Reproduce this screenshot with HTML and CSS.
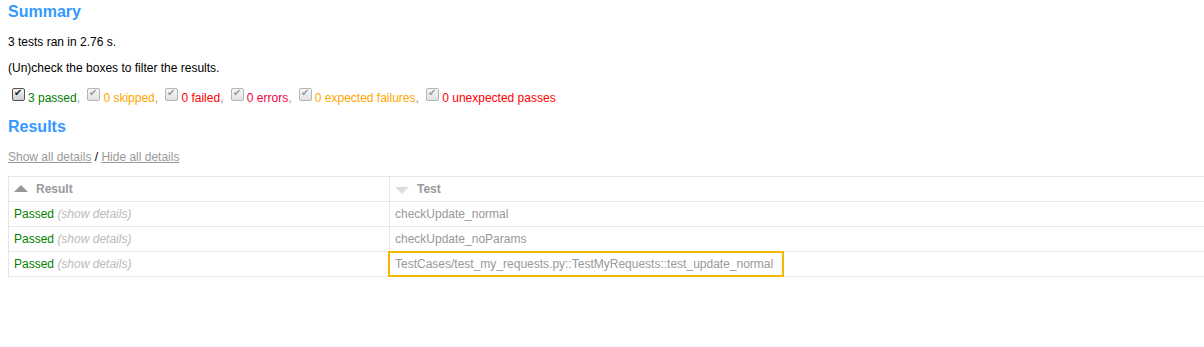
FILE: index.html
```html
<!DOCTYPE html>
<html lang="en">
<head>
  <meta charset="UTF-8" />
  <title>Test Report</title>
  <link rel="stylesheet" href="styles.css">
</head>
<body>
  <h2>Summary</h2>
  <p>3 tests ran in 2.76 s.</p>
  <p class="filter">(Un)check the boxes to filter the results.</p>
  <div class="filters">
    <input type="checkbox" class="check" checked><span class="passed">3 passed</span>,
    <input type="checkbox" class="check" checked disabled><span class="skipped">0 skipped</span>,
    <input type="checkbox" class="check" checked disabled><span class="failed">0 failed</span>,
    <input type="checkbox" class="check" checked disabled><span class="error">0 errors</span>,
    <input type="checkbox" class="check" checked disabled><span class="skipped">0 expected failures</span>,
    <input type="checkbox" class="check" checked disabled><span class="failed">0 unexpected passes</span>
  </div>
  <h2>Results</h2>
  <p class="details"><a href="#">Show all details</a> / <a href="#">Hide all details</a></p>
  <table class="results">
    <thead>
      <tr>
        <th class="col-result"><span class="arrow up"></span>Result</th>
        <th><span class="arrow down"></span>Test</th>
      </tr>
    </thead>
    <tbody>
      <tr>
        <td class="col-result"><span class="passed">Passed</span> <span class="more">(show details)</span></td>
        <td>checkUpdate_normal</td>
      </tr>
      <tr>
        <td class="col-result"><span class="passed">Passed</span> <span class="more">(show details)</span></td>
        <td>checkUpdate_noParams</td>
      </tr>
      <tr>
        <td class="col-result"><span class="passed">Passed</span> <span class="more">(show details)</span></td>
        <td><span class="selected">TestCases/test_my_requests.py::TestMyRequests::test_update_normal</span></td>
      </tr>
    </tbody>
  </table>
</body>
</html>
```

FILE: styles.css
```css
html { overflow: hidden; }
body {
  margin: 0 0 0 8px;
  font-family: "Liberation Sans", Arial, sans-serif;
  font-size: 12px;
  color: #999;
}
h2 {
  font-size: 16px;
  color: #3399ff;
  margin: 0;
  line-height: 23px;
}
p { color: #000; margin: 12px 0; line-height: 14px; }
p.filter { margin-bottom: 10px; }
.filters { line-height: 19px; margin-bottom: 7px; }
.check {
  appearance: none;
  -webkit-appearance: none;
  width: 13px;
  height: 13px;
  margin: 3px 3px 3px 4px;
  vertical-align: -2px;
  border: 1px solid #555;
  border-radius: 2px;
  background: linear-gradient(#f4f4f4, #cfcfcf);
  position: relative;
}
.check::after {
  content: "✔";
  position: absolute;
  left: 1px;
  top: -2px;
  font-size: 10px;
  color: #222;
}
.check:disabled { border-color: #b5b5b5; background: linear-gradient(#f6f6f6, #e2e2e2); }
.check:disabled::after { color: #999; }
.passed { color: green; }
.skipped { color: orange; }
.failed { color: red; }
.error { color: #f0003c; }
.details { margin: 12px 0 12px; }
.details a { color: #999; }
.results {
  border-collapse: collapse;
  width: 1200px;
  border: 1px solid #e6e6e6;
}
.results th, .results td {
  padding: 5px;
  border: 1px solid #e6e6e6;
  text-align: left;
  line-height: 14px;
}
.results th { font-weight: bold; }
.col-result { width: 370px; }
.arrow {
  display: inline-block;
  width: 0;
  height: 0;
  border-left: 7px solid transparent;
  border-right: 7px solid transparent;
  margin-right: 8px;
  vertical-align: 1px;
}
.arrow.up { border-bottom: 7px solid #999; }
.arrow.down { border-top: 7px solid #ddd; vertical-align: -1px; }
.more { color: #bbb; font-style: italic; }
.selected {
  display: inline-block;
  border: 2px solid #f5b800;
  padding: 4px 9px 4px 5px;
  margin: -6px -15px -6px -7px;
}
```
